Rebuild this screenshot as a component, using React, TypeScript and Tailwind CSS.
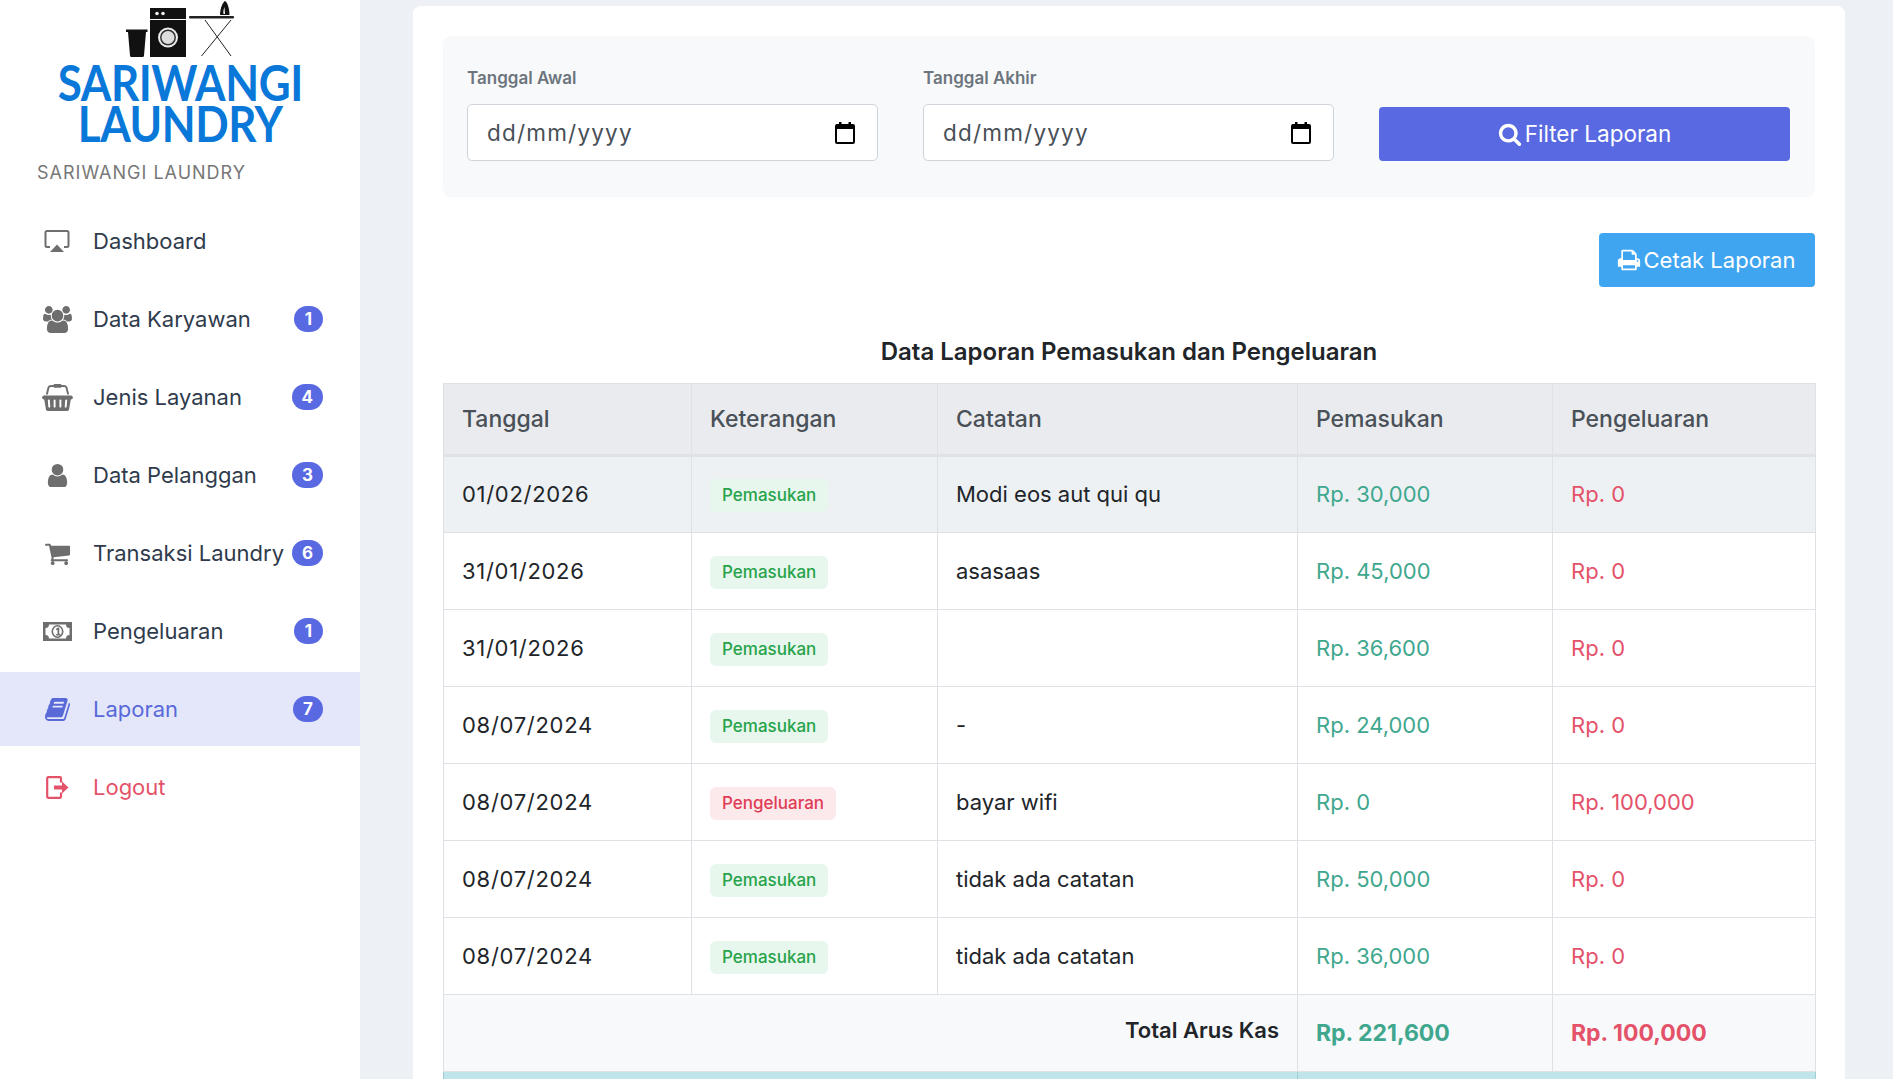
import type { ReactNode } from 'react';

const font = { fontFamily: 'Inter, "Noto Sans", sans-serif' };

function Fa({ w, d, className }: { w: number; d: string; className: string }) {
  return (
    <svg viewBox={`0 0 ${w} 1792`} className={className} fill="currentColor">
      <path d={d} />
    </svg>
  );
}

const paths = {
  users:
    'M593 896q-162 5-265 128h-134q-82 0-138-40.5t-56-118.5q0-353 124-353 6 0 43.5 21t97.5 42.5 119 21.5q67 0 133-23-5 37-5 66 0 139 81 256zm1071 637q0 120-73 189.5t-194 69.5h-874q-121 0-194-69.5t-73-189.5q0-53 3.5-103.5t14-109 26.5-108.5 43-97.5 62-81 85.5-53.5 111.5-20q10 0 43 21.5t73 48 107 48 135 21.5 135-21.5 107-48 73-48 43-21.5q61 0 111.5 20t85.5 53.5 62 81 43 97.5 26.5 108.5 14 109 3.5 103.5zm-1024-1277q0 106-75 181t-181 75-181-75-75-181 75-181 181-75 181 75 75 181zm704 384q0 159-112.5 271.5t-271.5 112.5-271.5-112.5-112.5-271.5 112.5-271.5 271.5-112.5 271.5 112.5 112.5 271.5zm576 225q0 78-56 118.5t-138 40.5h-134q-103-123-265-128 81-117 81-256 0-29-5-66 66 23 133 23 59 0 119-21.5t97.5-42.5 43.5-21q124 0 124 353zm-128-609q0 106-75 181t-181 75-181-75-75-181 75-181 181-75 181 75 75 181z',
  basket:
    'M1920 768q53 0 90.5 37.5t37.5 90.5-37.5 90.5-90.5 37.5h-15l-115 662q-8 46-44 76t-82 30h-1280q-46 0-82-30t-44-76l-115-662h-15q-53 0-90.5-37.5t-37.5-90.5 37.5-90.5 90.5-37.5h1792zm-1435 800q26-2 43.5-22.5t15.5-46.5l-32-416q-2-26-22.5-43.5t-46.5-15.5-43.5 22.5-15.5 46.5l32 416q2 25 20.5 42t43.5 17h5zm411-64v-416q0-26-19-45t-45-19-45 19-19 45v416q0 26 19 45t45 19 45-19 19-45zm384 0v-416q0-26-19-45t-45-19-45 19-19 45v416q0 26 19 45t45 19 45-19 19-45zm352 5l32-416q2-26-15.5-46.5t-43.5-22.5-46.5 15.5-22.5 43.5l-32 416q-2 26 15.5 46.5t43.5 22.5h5q25 0 43.5-17t20.5-42zm-1156-1217l-93 412h-132l101-441q19-88 89-143.5t160-55.5h167q0-26 19-45t45-19h384q26 0 45 19t19 45h167q90 0 160 55.5t89 143.5l101 441h-132l-93-412q-11-44-45.5-72t-79.5-28h-167q0 26-19 45t-45 19h-384q-26 0-45-19t-19-45h-167q-45 0-79.5 28t-45.5 72z',
  user:
    'M1536 1399q0 109-62.5 187t-150.5 78h-854q-88 0-150.5-78t-62.5-187q0-85 8.5-160.5t31.5-152 58.5-131 94-89 134.5-34.5q131 128 313 128t313-128q76 0 134.5 34.5t94 89 58.5 131 31.5 152 8.5 160.5zm-256-887q0 159-112.5 271.5t-271.5 112.5-271.5-112.5-112.5-271.5 112.5-271.5 271.5-112.5 271.5 112.5 112.5 271.5z',
  cart:
    'M704 1536q0 52-38 90t-90 38-90-38-38-90 38-90 90-38 90 38 38 90zm896 0q0 52-38 90t-90 38-90-38-38-90 38-90 90-38 90 38 38 90zm128-1088v512q0 24-16.5 42.5t-40.5 21.5l-1044 122q13 60 13 70 0 16-24 64h920q26 0 45 19t19 45-19 45-45 19h-1024q-26 0-45-19t-19-45q0-11 8-31.5t16-36 21.5-40 15.5-29.5l-177-823h-204q-26 0-45-19t-19-45 19-45 45-19h256q16 0 28.5 6.5t19.5 15.5 13 24.5 8 26 5.5 29.5 4.5 26h1201q26 0 45 19t19 45z',
  book:
    'M1639 478q40 57 18 129l-275 906q-19 64-76.5 107.5t-122.5 43.5h-923q-77 0-148.5-53.5t-99.5-131.5q-24-67-2-127 0-4 3-27t4-37q1-8-3-21.5t-3-19.5q2-11 8-21t16.5-23.5 16.5-23.5q23-38 45-91.5t30-91.5q3-10 .5-30t-.5-28q3-11 17-28t17-23q21-36 42-92t25-90q1-9-2.5-32t.5-28q4-13 22-30.5t22-22.5q19-26 42.5-84.5t27.5-96.5q1-8-3-25.5t-2-26.5q2-8 9-18t18-23 17-21q8-12 16.5-30.5t15-35 16-36 19.5-32 26.5-23.5 36-11.5 47.5 5.5l-1 3q38-9 51-9h761q74 0 114 56t18 130l-274 906q-36 119-71.5 153.5t-128.5 34.5h-869q-27 0-38 15-11 16-1 43 24 70 144 70h923q29 0 56-15.5t35-41.5l300-987q7-22 5-57 38 15 59 43zm-1064 2q-4 13 2 22.5t20 9.5h608q13 0 25.5-9.5t16.5-22.5l21-64q4-13-2-22.5t-20-9.5h-608q-13 0-25.5 9.5t-16.5 22.5zm-83 256q-4 13 2 22.5t20 9.5h608q13 0 25.5-9.5t16.5-22.5l21-64q4-13-2-22.5t-20-9.5h-608q-13 0-25.5 9.5t-16.5 22.5z',
  search:
    'M1216 832q0-185-131.5-316.5t-316.5-131.5-316.5 131.5-131.5 316.5 131.5 316.5 316.5 131.5 316.5-131.5 131.5-316.5zm512 832q0 52-38 90t-90 38q-54 0-90-38l-343-342q-179 124-399 124-143 0-273.5-55.5t-225-150-150-225-55.5-273.5 55.5-273.5 150-225 225-150 273.5-55.5 273.5 55.5 225 150 150 225 55.5 273.5q0 220-124 399l343 343q37 37 37 90z',
  print:
    'M448 1536h896v-256h-896v256zm0-640h896v-384h-160q-40 0-68-28t-28-68v-160h-640v640zm1152 64q0-26-19-45t-45-19-45 19-19 45 19 45 45 19 45-19 19-45zm128 0v416q0 13-9.5 22.5t-22.5 9.5h-224v160q0 40-28 68t-68 28h-960q-40 0-68-28t-28-68v-160h-224q-13 0-22.5-9.5t-9.5-22.5v-416q0-79 56.5-135.5t135.5-56.5h64v-544q0-40 28-68t68-28h672q40 0 88 20t76 48l152 152q28 28 48 76t20 88v256h64q79 0 135.5 56.5t56.5 135.5z',
};

function AirplayIcon() {
  return (
    <svg viewBox="0 0 26 24" className="h-[24px] w-[26px]" fill="none">
      <path d="M6 18H3a1.5 1.5 0 0 1-1.5-1.5v-13A1.5 1.5 0 0 1 3 2h20a1.5 1.5 0 0 1 1.5 1.5v13A1.5 1.5 0 0 1 23 18h-3" stroke="currentColor" strokeWidth="2" />
      <path d="M13 15.5 20 23H6z" fill="currentColor" />
    </svg>
  );
}

function MoneyIcon() {
  return (
    <svg viewBox="0 0 29 19" className="h-[19px] w-[29px]">
      <rect width="29" height="19" fill="currentColor" />
      <path d="M6 2.500h17a3.500 3.500 0 0 0 3.500 3.500v7a3.500 3.500 0 0 0-3.500 3.500H6A3.500 3.500 0 0 0 2.500 13V6A3.500 3.500 0 0 0 6 2.500z" fill="#fff" />
      <ellipse cx="14.500" cy="9.500" rx="6" ry="6.500" fill="currentColor" />
      <ellipse cx="14.500" cy="9.500" rx="4.400" ry="5" fill="#fff" />
      <path d="M12.800 7 15 5.500h1.300v6.600h1.200v1.400h-4.300v-1.400h1.300V7.600l-1 .7z" fill="currentColor" />
    </svg>
  );
}

function LogoutIcon() {
  return (
    <svg viewBox="0 0 23 23" className="h-[23px] w-[23px]" fill="none">
      <path d="M15 6.500V2.200a1 1 0 0 0-1-1H2.200a1 1 0 0 0-1 1v18.600a1 1 0 0 0 1 1H14a1 1 0 0 0 1-1v-4.300" stroke="currentColor" strokeWidth="2.200" />
      <path d="M8 9.500h8V5.500l6.500 6-6.500 6v-4H8z" fill="currentColor" />
    </svg>
  );
}

function CalendarIcon() {
  return (
    <svg viewBox="0 0 20 22" className="h-[22px] w-[20px]">
      <path d="M4 0h2.500v2h7V0H16v2h2a2 2 0 0 1 2 2v16a2 2 0 0 1-2 2H2a2 2 0 0 1-2-2V4a2 2 0 0 1 2-2h2zM2 7v13h16V7z" fill="#000" fillRule="evenodd" />
    </svg>
  );
}

function LogoArt() {
  return (
    <svg viewBox="0 0 108 57" className="h-[57px] w-[108px]">
      <path d="M0 29.500h21.500v2.500H20l-2 23.500a1.500 1.500 0 0 1-1.500 1.500h-11A1.500 1.500 0 0 1 4 55.500L2 32H0z" fill="#111" />
      <rect x="24" y="8" width="36" height="49" fill="#111" />
      <rect x="24" y="19" width="36" height="1" fill="#fff" />
      <circle cx="31" cy="13.500" r="1.800" fill="#eee" />
      <circle cx="37" cy="13.500" r="1.800" fill="#eee" />
      <circle cx="42" cy="37.500" r="10" fill="#eee" />
      <circle cx="42" cy="37.500" r="8" fill="#333" />
      <circle cx="42" cy="37.500" r="6.500" fill="#ddd" />
      <rect x="63" y="16" width="45" height="2.400" rx="1" fill="#222" />
      <path d="M75.500 56 105 20M79 20l26 36" stroke="#222" strokeWidth="1" fill="none" />
      <path d="M94 15c0-7 3-13 5-14 2.500 1 4.500 8 4.500 14z" fill="#111" />
      <path d="M98.500 7c-1 2-1.500 5-1 7h1.500z" fill="#eee" />
    </svg>
  );
}

const menu: { label: string; icon: ReactNode; badge?: number; active?: boolean; danger?: boolean }[] = [
  { label: 'Dashboard', icon: <AirplayIcon /> },
  { label: 'Data Karyawan', icon: <Fa w={1920} d={paths.users} className="h-[27px] w-[29px]" />, badge: 1 },
  { label: 'Jenis Layanan', icon: <Fa w={2048} d={paths.basket} className="h-[27px] w-[31px]" />, badge: 4 },
  { label: 'Data Pelanggan', icon: <Fa w={1792} d={paths.user} className="h-[27px] w-[27px]" />, badge: 3 },
  { label: 'Transaksi Laundry', icon: <Fa w={1792} d={paths.cart} className="h-[27px] w-[27px]" />, badge: 6 },
  { label: 'Pengeluaran', icon: <MoneyIcon />, badge: 1 },
  { label: 'Laporan', icon: <Fa w={1664} d={paths.book} className="h-[27px] w-[25px]" />, badge: 7, active: true },
  { label: 'Logout', icon: <LogoutIcon />, danger: true },
];

type Row = { date: string; kind: 'Pemasukan' | 'Pengeluaran'; note: string; inAmt: string; outAmt: string };

const rows: Row[] = [
  { date: '01/02/2026', kind: 'Pemasukan', note: 'Modi eos aut qui qu', inAmt: 'Rp. 30,000', outAmt: 'Rp. 0' },
  { date: '31/01/2026', kind: 'Pemasukan', note: 'asasaas', inAmt: 'Rp. 45,000', outAmt: 'Rp. 0' },
  { date: '31/01/2026', kind: 'Pemasukan', note: '', inAmt: 'Rp. 36,600', outAmt: 'Rp. 0' },
  { date: '08/07/2024', kind: 'Pemasukan', note: '-', inAmt: 'Rp. 24,000', outAmt: 'Rp. 0' },
  { date: '08/07/2024', kind: 'Pengeluaran', note: 'bayar wifi', inAmt: 'Rp. 0', outAmt: 'Rp. 100,000' },
  { date: '08/07/2024', kind: 'Pemasukan', note: 'tidak ada catatan', inAmt: 'Rp. 50,000', outAmt: 'Rp. 0' },
  { date: '08/07/2024', kind: 'Pemasukan', note: 'tidak ada catatan', inAmt: 'Rp. 36,000', outAmt: 'Rp. 0' },
];

function Sidebar() {
  return (
    <aside className="w-[360px] shrink-0 bg-white">
      <div className="flex flex-col items-center">
        <LogoArt />
        <div className="mt-[5px] scale-x-[0.88] text-center text-[50px] leading-[41px] font-bold tracking-[-0.5px] text-[#0a78d8]" style={{ fontFamily: 'Lato, sans-serif' }}>
          <div>SARIWANGI</div>
          <div>LAUNDRY</div>
        </div>
      </div>
      <div className="mt-[16px] pl-[37px] text-[18px] leading-[26px] tracking-[1px] text-[#777]">SARIWANGI LAUNDRY</div>
      <nav className="mt-[18px] flex flex-col gap-[4px]">
        {menu.map((m) => (
          <div
            key={m.label}
            className={`flex h-[74px] items-center pl-[30px] pr-[37px] ${m.active ? 'bg-[#e4e7fa] text-[#5969d8]' : ''} ${m.danger ? 'text-[#e4526a]' : ''} ${!m.active && !m.danger ? 'text-[#2f3b4c]' : ''}`}
          >
            <span className={`mr-[9px] flex w-[54px] shrink-0 justify-center ${m.active || m.danger ? '' : 'text-[#6e6e6e]'}`}>{m.icon}</span>
            <span className="text-[22px] whitespace-nowrap">{m.label}</span>
            {m.badge !== undefined && (
              <span className="ml-auto flex h-[26px] min-w-[29px] items-center justify-center rounded-full bg-[#5969e2] px-[10px] pt-[1px] text-[17px] font-bold text-white">
                {m.badge}
              </span>
            )}
          </div>
        ))}
      </nav>
    </aside>
  );
}

function DateField({ label }: { label: string }) {
  return (
    <div>
      <div className="mb-[14px] text-[17px] leading-[24px] font-semibold text-[#6c757d]">{label}</div>
      <div className="flex h-[57px] items-center justify-between rounded-[5px] border border-[#ced4da] bg-white pl-[19px] pr-[22px]">
        <span className="text-[22.5px] tracking-[1.2px] text-[#495057]">dd/mm/yyyy</span>
        <CalendarIcon />
      </div>
    </div>
  );
}

function Badge({ kind }: { kind: Row['kind'] }) {
  const isIn = kind === 'Pemasukan';
  return (
    <span className={`inline-block rounded-[6px] px-[12px] py-[5px] text-[17px] leading-[23px] font-medium ${isIn ? 'bg-[#e7f7ee] text-[#27a34a]' : 'bg-[#fce9ec] text-[#e03c55]'}`}>
      {kind}
    </span>
  );
}

function ReportTable() {
  const th = 'border border-[#dee2e6] border-b-[3px] px-[18px] text-left text-[23px] font-medium text-[#495057]';
  const td = 'border border-[#dee2e6] px-[18px] text-[22px]';
  return (
    <table className="w-full table-fixed border-collapse">
      <colgroup>
        <col className="w-[248px]" />
        <col className="w-[246px]" />
        <col className="w-[360px]" />
        <col className="w-[255px]" />
        <col className="w-[263px]" />
      </colgroup>
      <thead>
        <tr className="h-[72px] bg-[#e9ebee]">
          <th className={th}>Tanggal</th>
          <th className={th}>Keterangan</th>
          <th className={th}>Catatan</th>
          <th className={th}>Pemasukan</th>
          <th className={th}>Pengeluaran</th>
        </tr>
      </thead>
      <tbody>
        {rows.map((r, i) => (
          <tr key={i} className={`h-[77px] text-[#212529] ${i === 0 ? 'bg-[#edf1f4]' : 'bg-white'}`}>
            <td className={`${td} tracking-[0.7px]`}>{r.date}</td>
            <td className={td}><Badge kind={r.kind} /></td>
            <td className={td}>{r.note}</td>
            <td className={`${td} text-[#3fa78e]`}>{r.inAmt}</td>
            <td className={`${td} text-[#e4526a]`}>{r.outAmt}</td>
          </tr>
        ))}
        <tr className="h-[77px] bg-[#f8f9fa]">
          <td colSpan={3} className={`${td} pb-[6px] text-right font-semibold text-[#212529]`}>Total Arus Kas</td>
          <td className={`${td} text-[23px] font-bold text-[#3fa78e]`}>Rp. 221,600</td>
          <td className={`${td} text-[23px] font-bold text-[#e4526a]`}>Rp. 100,000</td>
        </tr>
        <tr className="h-[60px] bg-[#bfe4e9]">
          <td colSpan={3} className="border border-[#9fcdd4]" />
          <td colSpan={2} className="border border-[#9fcdd4]" />
        </tr>
      </tbody>
    </table>
  );
}

export default function App() {
  return (
    <div className="flex h-screen overflow-hidden bg-[#edf1f5]" style={font}>
      <Sidebar />
      <main className="min-w-0 flex-1 pl-[53px] pr-[48px] pt-[6px]">
        <div className="rounded-[8px] bg-white p-[30px]">
          <div className="grid grid-cols-[repeat(3,411px)] items-end gap-[45px] rounded-[8px] bg-[#f8f9fa] px-[24px] pb-[36px] pt-[30px]">
            <DateField label="Tanggal Awal" />
            <DateField label="Tanggal Akhir" />
            <button className="flex h-[54px] items-center justify-center gap-[3px] rounded-[4px] bg-[#5969e2] text-[22.5px] text-white">
              <Fa w={1792} d={paths.search} className="h-[24px] w-[24px]" />
              Filter Laporan
            </button>
          </div>
          <div className="mt-[36px] flex justify-end">
            <button className="flex h-[54px] w-[216px] items-center justify-center gap-[3px] rounded-[4px] bg-[#3fa5f0] pr-[2px] text-[22px] text-white">
              <Fa w={1792} d={paths.print} className="h-[24px] w-[24px]" />
              Cetak Laporan
            </button>
          </div>
          <h2 className="mb-[15px] mt-[49px] text-center text-[24px] leading-[32px] font-semibold text-[#212529]">
            Data Laporan Pemasukan dan Pengeluaran
          </h2>
          <ReportTable />
        </div>
      </main>
    </div>
  );
}
